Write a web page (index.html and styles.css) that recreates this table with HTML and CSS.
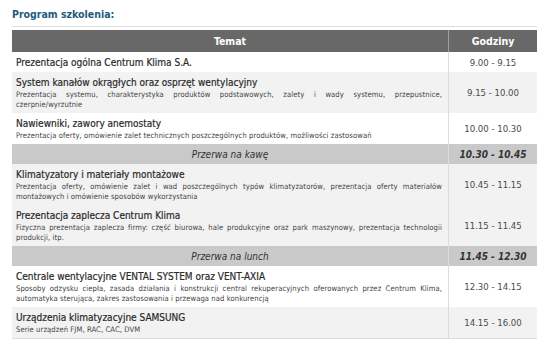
FILE: index.html
```html
<!DOCTYPE html>
<html lang="pl">
<head>
<meta charset="utf-8">
<link rel="stylesheet" href="styles.css">
</head>
<body>
<div class="page">
  <h2 class="heading">Program szkolenia:</h2>
  <table class="program">
    <thead>
      <tr><th class="c-topic">Temat</th><th class="c-time">Godziny</th></tr>
    </thead>
    <tbody>
      <tr class="odd">
        <td class="c-topic"><div class="t">Prezentacja ogólna Centrum Klima S.A.</div></td>
        <td class="c-time">9.00 - 9.15</td>
      </tr>
      <tr class="even">
        <td class="c-topic"><div class="t">System kanałów okrągłych oraz osprzęt wentylacyjny</div><div class="d">Prezentacja systemu, charakterystyka produktów podstawowych, zalety i wady systemu, przepustnice, czerpnie/wyrzutnie</div></td>
        <td class="c-time">9.15 - 10.00</td>
      </tr>
      <tr class="odd">
        <td class="c-topic"><div class="t">Nawiewniki, zawory anemostaty</div><div class="d">Prezentacja oferty, omówienie zalet technicznych poszczególnych produktów, możliwości zastosowań</div></td>
        <td class="c-time">10.00 - 10.30</td>
      </tr>
      <tr class="break">
        <td class="c-topic">Przerwa na kawę</td>
        <td class="c-time">10.30 - 10.45</td>
      </tr>
      <tr class="even">
        <td class="c-topic"><div class="t">Klimatyzatory i materiały montażowe</div><div class="d">Prezentacja oferty, omówienie zalet i wad poszczególnych typów klimatyzatorów, prezentacja oferty materiałów montażowych i omówienie sposobów wykorzystania</div></td>
        <td class="c-time">10.45 - 11.15</td>
      </tr>
      <tr class="even">
        <td class="c-topic"><div class="t">Prezentacja zaplecza Centrum Klima</div><div class="d">Fizyczna prezentacja zaplecza firmy: część biurowa, hale produkcyjne oraz park maszynowy, prezentacja technologii produkcji, itp.</div></td>
        <td class="c-time">11.15 - 11.45</td>
      </tr>
      <tr class="break">
        <td class="c-topic">Przerwa na lunch</td>
        <td class="c-time">11.45 - 12.30</td>
      </tr>
      <tr class="odd">
        <td class="c-topic"><div class="t">Centrale wentylacyjne VENTAL SYSTEM oraz VENT-AXIA</div><div class="d">Sposoby odzysku ciepła, zasada działania i konstrukcji central rekuperacyjnych oferowanych przez Centrum Klima, automatyka sterująca, zakres zastosowania i przewaga nad konkurencją</div></td>
        <td class="c-time">12.30 - 14.15</td>
      </tr>
      <tr class="even">
        <td class="c-topic"><div class="t">Urządzenia klimatyzacyjne SAMSUNG</div><div class="d">Serie urządzeń FJM, RAC, CAC, DVM</div></td>
        <td class="c-time">14.15 - 16.00</td>
      </tr>
    </tbody>
  </table>
</div>
</body>
</html>
```

FILE: styles.css
```css
html, body {
  margin: 0;
  padding: 0;
  background: #ffffff;
}
.page {
  padding: 6px 19px 0 12px;
  font-family: "DejaVu Sans Condensed", "DejaVu Sans", sans-serif;
  color: #333333;
}
.heading {
  margin: 0;
  font-size: 10.5px;
  line-height: 16px;
  font-weight: bold;
  color: #1e5b7c;
  padding-bottom: 4px;
  border-bottom: 1px solid #dddddd;
  margin-bottom: 3px;
}
.program {
  width: 525px;
  border-collapse: collapse;
  table-layout: fixed;
  border-bottom: 1px solid #dddddd;
}
.program th {
  background: #686868;
  color: #ffffff;
  font-size: 10.5px;
  font-weight: bold;
  height: 22px;
  padding: 0;
  text-align: center;
}
.program th.c-time {
  border-left: 1px solid #a0a0a0;
}
.program th.c-topic { width: 436px; }
.program td {
  padding: 4px 6px 3px 4px;
  vertical-align: top;
}
.program td.c-time {
  border-left: 1px solid #dddddd;
  text-align: center;
  vertical-align: middle;
  font-size: 9.5px;
  color: #4a4a4a;
  padding: 0;
}
.odd td { background: #ffffff; }
.even td { background: #f2f2f2; }
.t {
  font-size: 10px;
  line-height: 13px;
  color: #2a2a2a;
  -webkit-text-stroke: 0.2px #2a2a2a;
}
.d {
  margin-top: 1px;
  font-size: 7.6px;
  letter-spacing: 0.08px;
  line-height: 10px;
  text-align: justify;
  color: #444444;
}
.break td {
  background: #c9c9c9;
  height: 20px;
  padding: 0;
  font-style: italic;
  font-size: 10px;
  text-align: center;
  vertical-align: middle;
  color: #333333;
}
.break td.c-time {
  font-weight: bold;
  font-size: 10px;
  color: #333333;
}
```
